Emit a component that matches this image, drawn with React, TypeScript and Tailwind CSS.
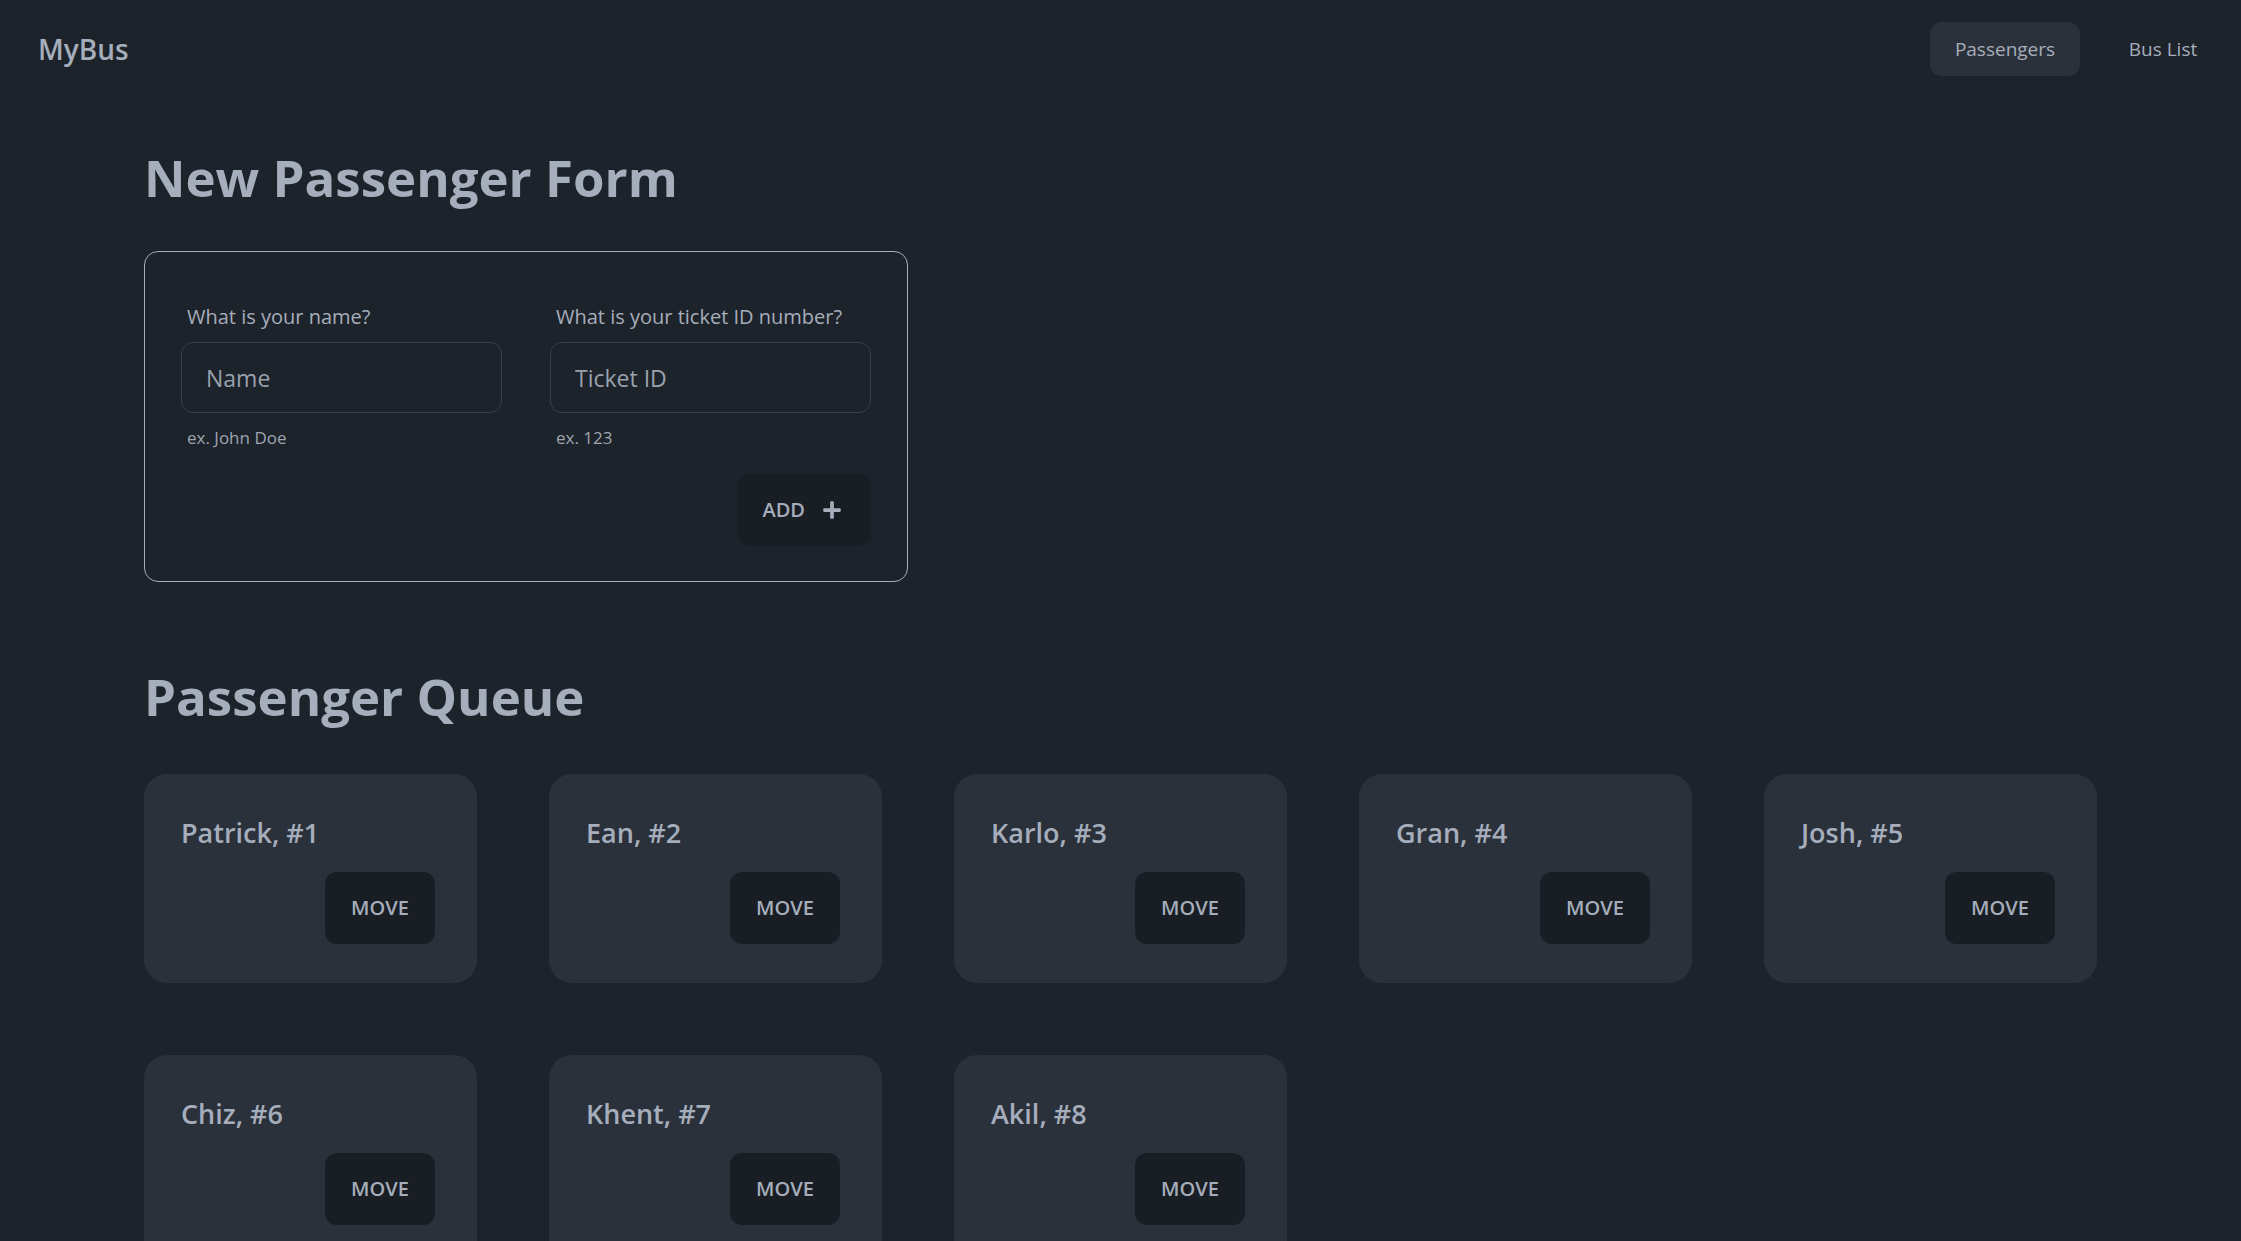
import { FaPlus } from "react-icons/fa";

const passengers = [
  { name: "Patrick", id: 1 },
  { name: "Ean", id: 2 },
  { name: "Karlo", id: 3 },
  { name: "Gran", id: 4 },
  { name: "Josh", id: 5 },
  { name: "Chiz", id: 6 },
  { name: "Khent", id: 7 },
  { name: "Akil", id: 8 },
];

const fields = [
  { label: "What is your name?", placeholder: "Name", hint: "ex. John Doe" },
  { label: "What is your ticket ID number?", placeholder: "Ticket ID", hint: "ex. 123" },
];

function Navbar() {
  return (
    <nav className="flex h-[96px] items-center justify-between pl-[38px] pr-[19px] pt-[2px]">
      <a href="#" className="text-[28px] font-semibold leading-[40px]">
        MyBus
      </a>
      <ul className="flex items-center gap-[24px]">
        <li>
          <a
            href="#"
            className="flex h-[54px] w-[150px] items-center justify-center rounded-[12px] bg-[#2b313a] text-[19px]"
          >
            Passengers
          </a>
        </li>
        <li>
          <a href="#" className="flex h-[54px] w-[118px] items-center justify-center rounded-[12px] text-[19px]">
            Bus List
          </a>
        </li>
      </ul>
    </nav>
  );
}

function PassengerForm() {
  return (
    <form className="w-[764px] rounded-[14px] border border-[#a6adbb] px-[36px] pb-[35px] pt-[40px]">
      <div className="grid grid-cols-2 gap-x-[48px]">
        {fields.map((f) => (
          <label key={f.label} className="flex flex-col">
            <span className="px-[6px] py-[11px] text-[20px] leading-[28px]">{f.label}</span>
            <input
              type="text"
              placeholder={f.placeholder}
              className="h-[71px] rounded-[12px] border border-[#383f49] bg-transparent pl-[24px] text-[23px] outline-none placeholder:text-[#9aa1ad]"
            />
            <span className="px-[6px] pb-[11px] pt-[13px] text-[17px] leading-[23px] text-[#9ea5b1]">{f.hint}</span>
          </label>
        ))}
      </div>
      <div className="mt-[14px] flex justify-end">
        <button
          type="button"
          className="flex h-[72px] items-center gap-[17px] rounded-[12px] bg-[#191e24] pl-[24px] pr-[29px] text-[20px] font-semibold uppercase"
        >
          Add
          <FaPlus className="h-[20px] w-[20px]" />
        </button>
      </div>
    </form>
  );
}

function PassengerCard({ name, id }: { name: string; id: number }) {
  return (
    <div className="flex h-[209px] flex-col rounded-[23px] bg-[#2a313b] pb-[39px] pl-[37px] pr-[42px] pt-[39px]">
      <h3 className="text-[27px] font-semibold leading-[40px]">
        {name}, #{id}
      </h3>
      <div className="mt-[19px] flex justify-end">
        <button
          type="button"
          className="flex h-[72px] w-[110px] items-center justify-center rounded-[12px] bg-[#191e24] text-[20px] font-semibold uppercase"
        >
          Move
        </button>
      </div>
    </div>
  );
}

export default function App() {
  return (
    <div
      className="min-h-screen bg-[#1d232a] text-[#a6adbb]"
      style={{ fontFamily: '"Open Sans", "Noto Sans", sans-serif' }}
    >
      <Navbar />
      <main className="px-[144px] pb-[80px] pt-[53px]">
        <h1 className="mb-[45px] text-[51px] font-bold leading-[57px]">New Passenger Form</h1>
        <PassengerForm />

        <h2 className="mb-[49px] mt-[86px] text-[51px] font-bold leading-[57px]">Passenger Queue</h2>
        <div className="grid grid-cols-5 gap-[72px]">
          {passengers.map((p) => (
            <PassengerCard key={p.id} name={p.name} id={p.id} />
          ))}
        </div>
      </main>
    </div>
  );
}
